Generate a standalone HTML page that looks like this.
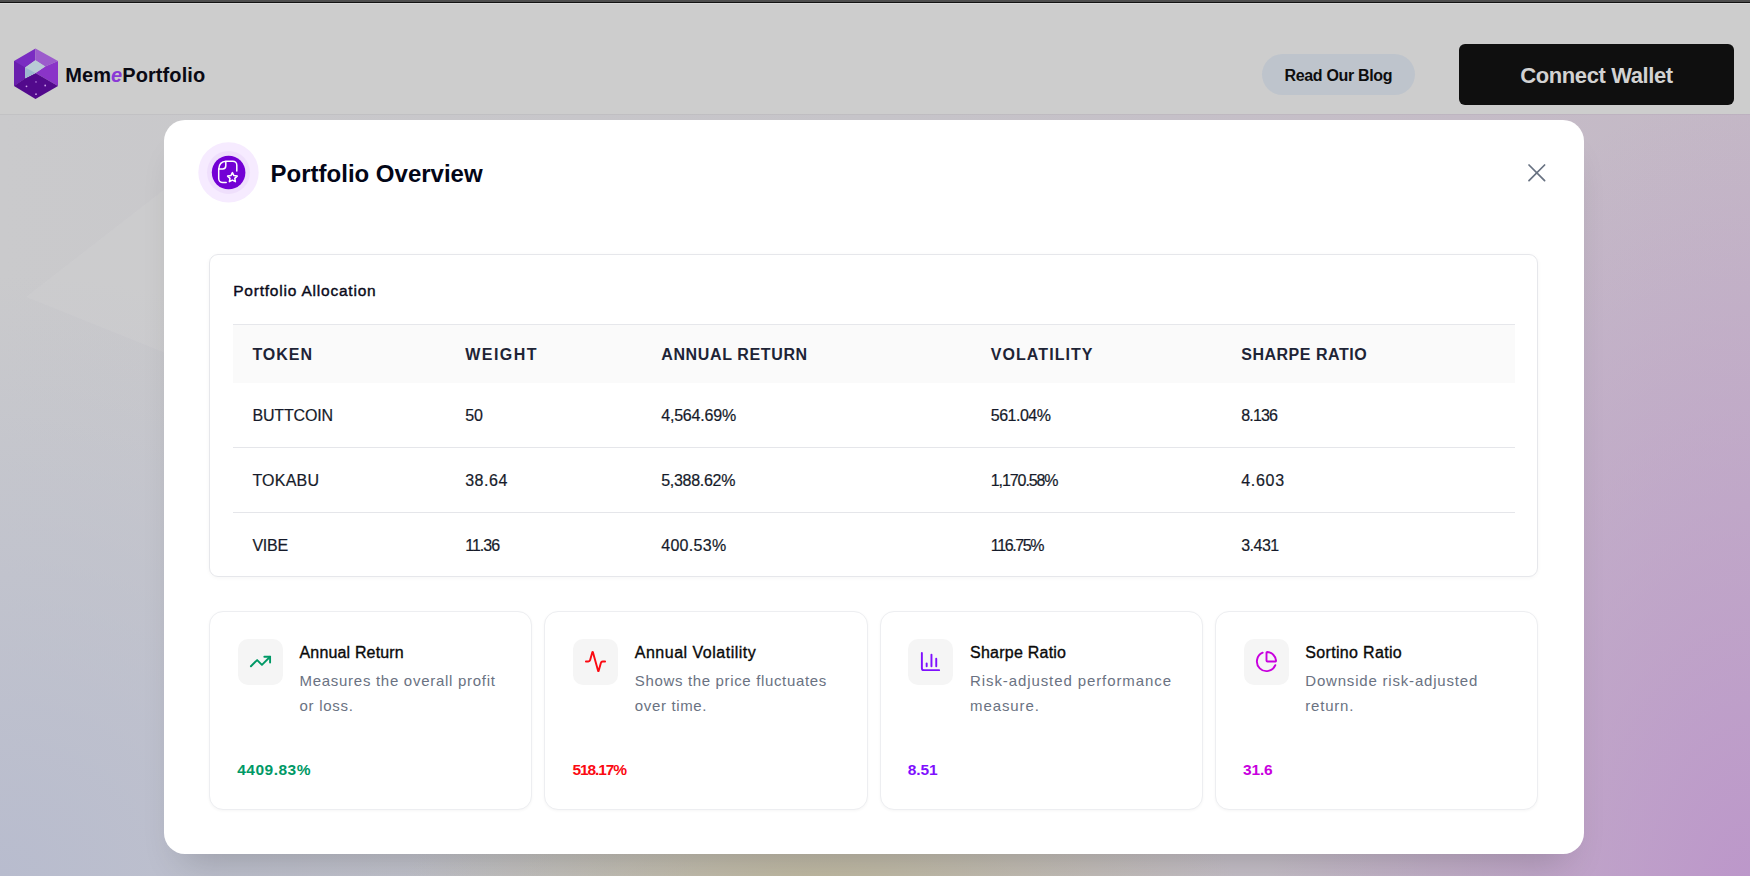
<!DOCTYPE html>
<html><head><meta charset="utf-8">
<style>
html,body{margin:0;padding:0;}
body{width:1750px;height:876px;overflow:hidden;position:relative;font-family:"Liberation Sans",sans-serif;background:#cdcdcd;}
.t{position:absolute;white-space:nowrap;line-height:1;}
.abs{position:absolute;}
#topbar{left:0;top:0;width:1750px;height:4px;background:linear-gradient(#4e4e4e 0,#4e4e4e 2px,#121212 2px,#121212 3px,#dadada 3px,#dadada 4px);}
#header{left:0;top:4px;width:1750px;height:110px;background:#cdcdcd;}
#hline{left:0;top:114px;width:1750px;height:1px;background:rgba(0,0,0,0.035);}
#backdrop{left:0;top:114px;width:1750px;height:762px;
 background:
  radial-gradient(ellipse 420px 140px at 820px 780px, rgba(190,182,150,0.85), rgba(190,182,150,0) 100%),
  radial-gradient(ellipse 480px 820px at 1750px 800px, rgba(188,150,202,1), rgba(188,150,202,0) 100%),
  radial-gradient(ellipse 700px 600px at 0px 761px, rgba(184,188,206,1), rgba(184,188,206,0) 100%),
  linear-gradient(90deg, #cacacc 0%, #c6c4c9 50%, #c4b8c6 100%);}
#modal{left:164px;top:120px;width:1420px;height:734px;background:#fff;border-radius:21px;box-shadow:0 24px 38px -18px rgba(0,0,0,0.2);}
#blog{left:1262px;top:54px;width:153px;height:41px;border-radius:21px;background:#bec4cc;}
#wallet{left:1459px;top:44px;width:275px;height:61px;border-radius:6px;background:#0f0f0f;}
#tcard{left:209px;top:254px;width:1327px;height:321px;border:1px solid #e6e7eb;border-radius:9px;box-shadow:0 1px 4px rgba(0,0,0,0.04);}
#thead{left:233px;top:324px;width:1282px;height:58px;background:#fafafa;border-top:1px solid #e6e7eb;}
.rline{left:233px;width:1282px;height:1px;background:#e5e6ea;}
.card{box-sizing:border-box;top:611px;width:323.25px;height:199px;border:1px solid #edeef1;border-radius:14px;background:#fff;box-shadow:0 1px 3px rgba(0,0,0,0.04);}
.ibox{top:639px;width:45px;height:46px;border-radius:10px;background:#f5f5f5;}
</style></head><body>
<div id="topbar" class="abs"></div>
<div id="header" class="abs"></div>
<div id="backdrop" class="abs"></div>
<div id="hline" class="abs"></div>
<svg class="abs" style="left:0;top:115px" width="200" height="300"><polygon points="26,182 170,70 170,240" fill="rgba(255,255,255,0.055)"/></svg>

<svg class="abs" style="left:0;top:0" width="80" height="110" viewBox="0 0 80 110">
  <polygon points="35.5,48.5 14,61 14,86 25.2,78.3 25.2,67.5 35.4,60.3" fill="#7a2cc2"/>
  <polygon points="14,61 25.2,67.5 25.2,78.3 14,86" fill="#6a1fae"/>
  <polygon points="35.5,48.5 58,61 45.2,66.5 35.4,60.3" fill="#9c5ccc"/>
  <polygon points="58,61 58,86 35.5,73 45.2,66.5" fill="#8a34c8"/>
  <polygon points="14,86 25.2,78.3 35.5,73 58,86 35.5,99" fill="#52098c"/>
  <polygon points="25.2,67.5 35.4,60.3 45.2,66.5 35.5,73 25.2,78.3" fill="#b9cad6"/>
  <polygon points="25.2,67.5 35.5,73 25.2,78.3" fill="#9db8cf"/>
  <circle cx="26.5" cy="86.3" r="0.9" fill="#c9a0e6"/>
  <circle cx="36" cy="81.9" r="0.9" fill="#9a60c8"/>
  <circle cx="45.2" cy="85.5" r="0.9" fill="#c9a0e6"/>
  <circle cx="36" cy="94.2" r="0.9" fill="#c9a0e6"/>
</svg>

<div id="blog" class="abs"></div>
<div id="wallet" class="abs"></div>

<div id="modal" class="abs"></div>

<svg class="abs" style="left:190px;top:134px" width="80" height="80" viewBox="190 134 80 80">
  <circle cx="228.5" cy="172.4" r="30.2" fill="#f6ebff"/>
  <circle cx="228.5" cy="172.4" r="21.5" fill="#efdffc"/>
  <circle cx="228.6" cy="172.5" r="16.8" fill="#7300d5"/>
  <g fill="none" stroke="#fff" stroke-width="1.5" stroke-linecap="round" stroke-linejoin="round">
    <path d="M236.8 171 V165.2 A4 4 0 0 0 232.8 161.2 H226 Q219.2 161.6 218.7 169 V178.6 A4 4 0 0 0 222.7 182.6 H226.2"/>
    <path d="M218.9 169 H222.6 A3.2 3.2 0 0 0 225.8 165.8 V161.4"/>
    <path d="M232.4 172.6 L233.9 175.6 L237.2 176.1 L234.8 178.4 L235.4 181.7 L232.4 180.1 L229.4 181.7 L230 178.4 L227.6 176.1 L230.9 175.6 Z"/>
  </g>
</svg>

<svg class="abs" style="left:1516px;top:152px" width="42" height="42" viewBox="1516 152 42 42">
  <g stroke="#687282" stroke-width="1.75" stroke-linecap="round">
    <line x1="1529" y1="165" x2="1544.6" y2="180.6"/>
    <line x1="1544.6" y1="165" x2="1529" y2="180.6"/>
  </g>
</svg>

<div id="tcard" class="abs"></div>
<div id="thead" class="abs"></div>
<div class="abs rline" style="top:446.5px"></div>
<div class="abs rline" style="top:511.5px"></div>

<div class="abs card" style="left:209px"></div>
<div class="abs card" style="left:544.25px"></div>
<div class="abs card" style="left:879.5px"></div>
<div class="abs card" style="left:1214.75px"></div>

<div class="abs ibox" style="left:238px"></div>
<div class="abs ibox" style="left:573.25px"></div>
<div class="abs ibox" style="left:908px"></div>
<div class="abs ibox" style="left:1243.75px"></div>

<svg class="abs" style="left:249px;top:649.5px" width="23" height="23" viewBox="0 0 24 24" fill="none" stroke="#009966" stroke-width="2" stroke-linecap="round" stroke-linejoin="round"><polyline points="22 7 13.5 15.5 8.5 10.5 2 17"/><polyline points="16 7 22 7 22 13"/></svg>
<svg class="abs" style="left:584.25px;top:649.5px" width="23" height="23" viewBox="0 0 24 24" fill="none" stroke="#fb0a12" stroke-width="2" stroke-linecap="round" stroke-linejoin="round"><path d="M22 12h-2.48a2 2 0 0 0-1.93 1.46l-2.35 8.36a.25.25 0 0 1-.48 0L9.24 2.18a.25.25 0 0 0-.48 0l-2.35 8.36A2 2 0 0 1 4.49 12H2"/></svg>
<svg class="abs" style="left:918.7px;top:649.5px" width="23" height="23" viewBox="0 0 24 24" fill="none" stroke="#7f10fe" stroke-width="2" stroke-linecap="round" stroke-linejoin="round"><path d="M3 3v16a2 2 0 0 0 2 2h16"/><path d="M18 17V9"/><path d="M13 17V5"/><path d="M8 17v-3"/></svg>
<svg class="abs" style="left:1254.75px;top:649.5px" width="23" height="23" viewBox="0 0 24 24" fill="none" stroke="#c800de" stroke-width="2" stroke-linecap="round" stroke-linejoin="round"><path d="M21 12c.552 0 1.005-.449.95-.998a10 10 0 0 0-8.953-8.951c-.55-.055-.998.398-.998.95v8a1 1 0 0 0 1 1z"/><path d="M21.21 15.89A10 10 0 1 1 8 2.83"/></svg>

<div class='t' style='left:65.20px;top:64.57px;font-size:20px;font-weight:700;color:#0a0a14;letter-spacing:0.090px;'>Mem<span style='color:#8a3ad6;font-style:italic'>e</span>Portfolio</div>
<div class='t' style='left:1284.50px;top:68.46px;font-size:16px;font-weight:700;color:#0e0e0e;letter-spacing:-0.335px;'>Read Our Blog</div>
<div class='t' style='left:1520.20px;top:65.38px;font-size:22px;font-weight:700;color:#d2d2d2;letter-spacing:-0.392px;'>Connect Wallet</div>
<div class='t' style='left:270.60px;top:161.68px;font-size:24px;font-weight:700;color:#030617;letter-spacing:-0.004px;'>Portfolio Overview</div>
<div class='t' style='left:233.20px;top:282.88px;font-size:15.5px;font-weight:400;color:#0a0a1a;letter-spacing:0.788px;-webkit-text-stroke:0.4px #0a0a1a;'>Portfolio Allocation</div>
<div class='t' style='left:252.40px;top:346.86px;font-size:16px;font-weight:700;color:#1e2436;letter-spacing:0.995px;'>TOKEN</div>
<div class='t' style='left:465.20px;top:346.86px;font-size:16px;font-weight:700;color:#1e2436;letter-spacing:1.480px;'>WEIGHT</div>
<div class='t' style='left:661.20px;top:346.86px;font-size:16px;font-weight:700;color:#1e2436;letter-spacing:0.635px;'>ANNUAL RETURN</div>
<div class='t' style='left:990.80px;top:346.86px;font-size:16px;font-weight:700;color:#1e2436;letter-spacing:1.062px;'>VOLATILITY</div>
<div class='t' style='left:1241.20px;top:346.86px;font-size:16px;font-weight:700;color:#1e2436;letter-spacing:0.516px;'>SHARPE RATIO</div>
<div class='t' style='left:252.40px;top:408.46px;font-size:16px;font-weight:400;color:#161b2a;letter-spacing:-0.154px;-webkit-text-stroke:0.2px #161b2a;'>BUTTCOIN</div>
<div class='t' style='left:465.20px;top:408.46px;font-size:16px;font-weight:400;color:#161b2a;letter-spacing:0.000px;-webkit-text-stroke:0.2px #161b2a;'>50</div>
<div class='t' style='left:661.20px;top:408.46px;font-size:16px;font-weight:400;color:#161b2a;letter-spacing:-0.189px;-webkit-text-stroke:0.2px #161b2a;'>4,564.69%</div>
<div class='t' style='left:990.80px;top:408.46px;font-size:16px;font-weight:400;color:#161b2a;letter-spacing:-0.495px;-webkit-text-stroke:0.2px #161b2a;'>561.04%</div>
<div class='t' style='left:1241.20px;top:408.46px;font-size:16px;font-weight:400;color:#161b2a;letter-spacing:-0.812px;-webkit-text-stroke:0.2px #161b2a;'>8.136</div>
<div class='t' style='left:252.40px;top:473.46px;font-size:16px;font-weight:400;color:#161b2a;letter-spacing:0.220px;-webkit-text-stroke:0.2px #161b2a;'>TOKABU</div>
<div class='t' style='left:465.20px;top:473.46px;font-size:16px;font-weight:400;color:#161b2a;letter-spacing:0.538px;-webkit-text-stroke:0.2px #161b2a;'>38.64</div>
<div class='t' style='left:661.20px;top:473.46px;font-size:16px;font-weight:400;color:#161b2a;letter-spacing:-0.289px;-webkit-text-stroke:0.2px #161b2a;'>5,388.62%</div>
<div class='t' style='left:990.80px;top:473.46px;font-size:16px;font-weight:400;color:#161b2a;letter-spacing:-1.089px;-webkit-text-stroke:0.2px #161b2a;'>1,170.58%</div>
<div class='t' style='left:1241.20px;top:473.46px;font-size:16px;font-weight:400;color:#161b2a;letter-spacing:0.713px;-webkit-text-stroke:0.2px #161b2a;'>4.603</div>
<div class='t' style='left:252.40px;top:538.46px;font-size:16px;font-weight:400;color:#161b2a;letter-spacing:-0.223px;-webkit-text-stroke:0.2px #161b2a;'>VIBE</div>
<div class='t' style='left:465.20px;top:538.46px;font-size:16px;font-weight:400;color:#161b2a;letter-spacing:-0.965px;-webkit-text-stroke:0.2px #161b2a;'>11.36</div>
<div class='t' style='left:661.20px;top:538.46px;font-size:16px;font-weight:400;color:#161b2a;letter-spacing:0.305px;-webkit-text-stroke:0.2px #161b2a;'>400.53%</div>
<div class='t' style='left:990.80px;top:538.46px;font-size:16px;font-weight:400;color:#161b2a;letter-spacing:-1.364px;-webkit-text-stroke:0.2px #161b2a;'>116.75%</div>
<div class='t' style='left:1241.20px;top:538.46px;font-size:16px;font-weight:400;color:#161b2a;letter-spacing:-0.512px;-webkit-text-stroke:0.2px #161b2a;'>3.431</div>
<div class='t' style='left:299.50px;top:645.46px;font-size:16px;font-weight:400;color:#0a0a0a;letter-spacing:0.159px;-webkit-text-stroke:0.35px #0a0a0a;'>Annual Return</div>
<div class='t' style='left:299.50px;top:672.90px;font-size:15px;font-weight:400;color:#6a7282;letter-spacing:0.717px;'>Measures the overall profit</div>
<div class='t' style='left:299.50px;top:697.50px;font-size:15px;font-weight:400;color:#6a7282;letter-spacing:0.717px;'>or loss.</div>
<div class='t' style='left:237.20px;top:761.68px;font-size:15.5px;font-weight:700;color:#009966;letter-spacing:0.498px;'>4409.83%</div>
<div class='t' style='left:634.75px;top:645.46px;font-size:16px;font-weight:400;color:#0a0a0a;letter-spacing:0.502px;-webkit-text-stroke:0.35px #0a0a0a;'>Annual Volatility</div>
<div class='t' style='left:634.75px;top:672.90px;font-size:15px;font-weight:400;color:#6a7282;letter-spacing:0.656px;'>Shows the price fluctuates</div>
<div class='t' style='left:634.75px;top:697.50px;font-size:15px;font-weight:400;color:#6a7282;letter-spacing:0.656px;'>over time.</div>
<div class='t' style='left:572.45px;top:761.68px;font-size:15.5px;font-weight:700;color:#fb0a12;letter-spacing:-1.101px;'>518.17%</div>
<div class='t' style='left:970.00px;top:645.46px;font-size:16px;font-weight:400;color:#0a0a0a;letter-spacing:0.237px;-webkit-text-stroke:0.35px #0a0a0a;'>Sharpe Ratio</div>
<div class='t' style='left:970.00px;top:672.90px;font-size:15px;font-weight:400;color:#6a7282;letter-spacing:0.906px;'>Risk-adjusted performance</div>
<div class='t' style='left:970.00px;top:697.50px;font-size:15px;font-weight:400;color:#6a7282;letter-spacing:0.906px;'>measure.</div>
<div class='t' style='left:907.70px;top:761.68px;font-size:15.5px;font-weight:700;color:#7f10fe;letter-spacing:-0.057px;'>8.51</div>
<div class='t' style='left:1305.25px;top:645.46px;font-size:16px;font-weight:400;color:#0a0a0a;letter-spacing:0.333px;-webkit-text-stroke:0.35px #0a0a0a;'>Sortino Ratio</div>
<div class='t' style='left:1305.25px;top:672.90px;font-size:15px;font-weight:400;color:#6a7282;letter-spacing:0.806px;'>Downside risk-adjusted</div>
<div class='t' style='left:1305.25px;top:697.50px;font-size:15px;font-weight:400;color:#6a7282;letter-spacing:0.806px;'>return.</div>
<div class='t' style='left:1242.95px;top:761.68px;font-size:15.5px;font-weight:700;color:#c800de;letter-spacing:-0.124px;'>31.6</div>
</body></html>
